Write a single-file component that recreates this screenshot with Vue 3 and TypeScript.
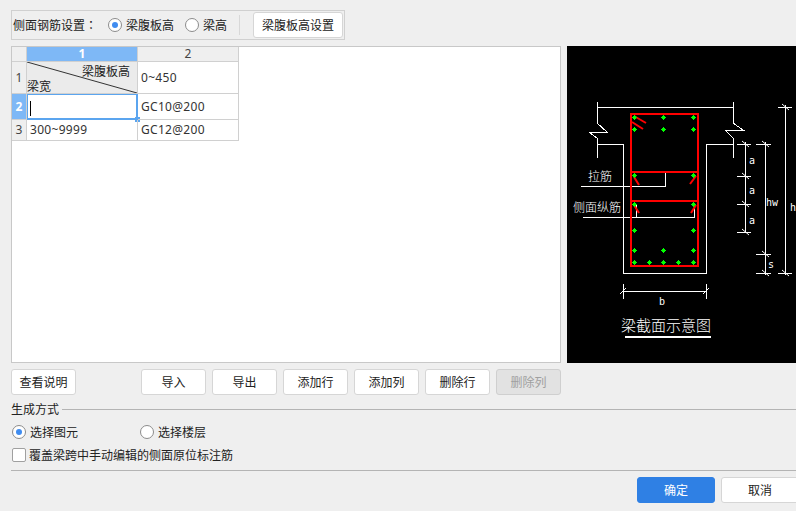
<script setup lang="ts">
const actions = [
  { label: "导入" },
  { label: "导出" },
  { label: "添加行" },
  { label: "添加列" },
  { label: "删除行" },
  { label: "删除列", disabled: true },
];

const topDots = [634, 663, 693];
const sideDots = [634, 693];
const bottomDots = [634, 649, 663, 678, 693];

const dots: number[][] = [
  ...topDots.map((x) => [x, 117]),
  ...topDots.map((x) => [x, 129]),
  ...sideDots.map((x) => [x, 175]),
  ...sideDots.map((x) => [x, 204]),
  ...sideDots.map((x) => [x, 230]),
  ...topDots.map((x) => [x, 250]),
  ...bottomDots.map((x) => [x, 262]),
];

// small blocky diamond, like the rasterised bar marks in the drawing
function dotPath(x: number, y: number) {
  return `M${x} ${y - 2}h1v1h1v1h1v1h-1v1h-1v1h-1v-1h-1v-1h-1v-1h1v-1h1z`;
}

const whiteLines = [
  "597,102 597,123 607,132 589,132 597,138 597,158",
  "733,102 733,123 743,130 725,130 733,138 733,158",
  "597,107 733,107",
  "597,144 623,144 623,273 706,273 706,144 733,144",
  "581,186 665,186 665,172",
  "583,217 694,217 694,204",
  "636,204 636,217",
  "745,142 745,233",
  "737,144 751,144",
  "737,176 751,176",
  "737,204 751,204",
  "737,232 751,232",
  "765,142 765,275",
  "756,144 771,144",
  "756,254 771,254",
  "756,273 771,273",
  "785,105 785,275",
  "778,107 792,107",
  "778,273 792,273",
  "623,284 623,299",
  "706,284 706,299",
  "623,291 706,291",
];

const ticks = [
  [742, 141, 749, 147],
  [742, 173, 749, 179],
  [742, 201, 749, 207],
  [742, 229, 749, 235],
  [762, 141, 769, 147],
  [762, 251, 769, 257],
  [762, 270, 769, 276],
  [782, 104, 789, 110],
  [782, 270, 789, 276],
  [620, 294, 626, 288],
  [703, 294, 709, 288],
];

const redHooks = [
  [634, 116, 646, 123],
  [632, 122, 643, 129],
  [634, 177, 639, 185],
  [696, 176, 690, 184],
  [634, 205, 639, 213],
  [696, 205, 691, 213],
];
</script>

<template>
  <div class="dialog">
    <div class="toolbar">
      <span class="toolbar-label">侧面钢筋设置<span class="colon">：</span></span>
      <label class="radio first"><i class="dot on"></i>梁腹板高</label>
      <label class="radio second"><i class="dot"></i>梁高</label>
      <span class="divider"></span>
      <button class="btn setting">梁腹板高设置</button>
    </div>

    <div class="main">
      <div class="panel">
        <div class="sheet">
          <div class="cell head corner"></div>
          <div class="cell head picked bold">1</div>
          <div class="cell head">2</div>

          <div class="cell head">1</div>
          <div class="cell diagonal">
            <svg class="slash" width="110" height="31" viewBox="0 0 110 31">
              <line x1="0" y1="0" x2="110" y2="31" stroke="#333" />
            </svg>
            <span class="diag-top">梁腹板高</span>
            <span class="diag-bottom">梁宽</span>
          </div>
          <div class="cell value">0~450</div>

          <div class="cell head picked bold">2</div>
          <div class="cell editing">
            <i class="caret"></i>
            <i class="handle"></i>
          </div>
          <div class="cell value">GC10@200</div>

          <div class="cell head">3</div>
          <div class="cell value">300~9999</div>
          <div class="cell value">GC12@200</div>
        </div>
      </div>

      <svg class="figure" width="229" height="317" viewBox="567 46 229 317">
        <rect x="567" y="46" width="229" height="317" fill="#000" />
        <g fill="none" stroke="#fff" shape-rendering="crispEdges">
          <polyline v-for="(pts, i) in whiteLines" :key="i" :points="pts" />
        </g>
        <g stroke="#fff">
          <line v-for="(t, i) in ticks" :key="i" :x1="t[0]" :y1="t[1]" :x2="t[2]" :y2="t[3]" />
        </g>
        <g fill="none" stroke="#f00" stroke-width="2" shape-rendering="crispEdges">
          <rect x="631" y="114" width="67" height="152" />
          <line x1="631" y1="172" x2="698" y2="172" />
          <line x1="631" y1="201" x2="698" y2="201" />
        </g>
        <g stroke="#f00" stroke-width="2">
          <line v-for="(h, i) in redHooks" :key="i" :x1="h[0]" :y1="h[1]" :x2="h[2]" :y2="h[3]" />
        </g>
        <g fill="#0f0" shape-rendering="crispEdges">
          <path v-for="(d, i) in dots" :key="i" :d="dotPath(d[0], d[1])" />
        </g>
        <g class="fig-text" fill="#fff">
          <text x="588" y="181" font-size="12">拉筋</text>
          <text x="573" y="212" font-size="12">侧面纵筋</text>
          <text x="621" y="331" font-size="15">梁截面示意图</text>
        </g>
        <g class="fig-latin" fill="#fff" font-size="10">
          <text x="749" y="164">a</text>
          <text x="749" y="194">a</text>
          <text x="749" y="224">a</text>
          <text x="766" y="206">hw</text>
          <text x="790" y="211">h</text>
          <text x="768" y="268">s</text>
          <text x="659" y="305">b</text>
        </g>
        <rect x="625" y="336" width="86" height="2" fill="#fff" />
      </svg>
    </div>

    <div class="actions">
      <button class="btn explain">查看说明</button>
      <button
        v-for="a in actions"
        :key="a.label"
        class="btn action"
        :class="{ disabled: a.disabled }"
      >
        {{ a.label }}
      </button>
    </div>

    <div class="group-title">
      <span>生成方式</span>
      <span class="rule"></span>
    </div>
    <div class="mode-row">
      <label class="radio mode"><i class="dot on"></i>选择图元</label>
      <label class="radio"><i class="dot"></i>选择楼层</label>
    </div>
    <label class="check"><i class="box"></i>覆盖梁跨中手动编辑的侧面原位标注筋</label>

    <div class="footer">
      <button class="btn ok">确定</button>
      <button class="btn cancel">取消</button>
    </div>
  </div>
</template>

<style>
html,
body {
  margin: 0;
  background: #efefef;
}
</style>

<style scoped>
.dialog {
  width: 796px;
  height: 511px;
  box-sizing: border-box;
  padding: 10px 0 0 11px;
  overflow: hidden;
  background: #efefef;
  color: #222;
  font: 12px/16px "Noto Sans CJK SC", "Noto Sans", sans-serif;
}
.toolbar {
  width: 334px;
  height: 30px;
  box-sizing: border-box;
  border: 1px solid #d0d0d0;
  display: flex;
  align-items: center;
  padding-left: 1px;
}
.toolbar-label {
  width: 95px;
}
.colon {
  font-family: "Noto Sans CJK TC", sans-serif;
}
.radio {
  display: flex;
  align-items: center;
  gap: 4px;
}
.radio.first {
  width: 77px;
}
.radio.second {
  width: 54px;
}
.dot {
  width: 14px;
  height: 14px;
  box-sizing: border-box;
  border: 1px solid #8c8c8c;
  border-radius: 50%;
  background: #fff;
  display: flex;
  align-items: center;
  justify-content: center;
}
.dot.on::after {
  content: "";
  width: 6px;
  height: 6px;
  border-radius: 50%;
  background: #3f8cf0;
}
.divider {
  width: 1px;
  height: 20px;
  background: #d8d8d8;
  margin-right: 13px;
}
.btn {
  box-sizing: border-box;
  height: 26px;
  padding: 0;
  background: #fff;
  border: 1px solid #d6d6d6;
  border-radius: 3px;
  color: #222;
  font: inherit;
}
.setting {
  width: 90px;
}
.main {
  display: flex;
  gap: 6px;
  height: 317px;
  margin-top: 6px;
}
.panel {
  width: 550px;
  box-sizing: border-box;
  border: 1px solid #c8c8c8;
  background: #fff;
}
.sheet {
  display: grid;
  grid-template-columns: 15px 111px 101px;
  grid-template-rows: 15px 32px 26px 21px;
  font-family: "Noto Sans", "Noto Sans CJK SC", sans-serif;
}
.cell {
  box-sizing: border-box;
  border-right: 1px solid #d0d0d0;
  border-bottom: 1px solid #d0d0d0;
  position: relative;
}
.head {
  background: #efefef;
  color: #444;
  display: flex;
  align-items: center;
  justify-content: center;
}
.picked {
  background: #7eb8f6;
  color: #fff;
}
.bold {
  font-weight: 700;
}
.value {
  display: flex;
  align-items: center;
  padding-left: 3px;
  color: #333;
  letter-spacing: 0.3px;
}
.diagonal {
  background: #ebebeb;
  font-family: "Noto Sans CJK SC", sans-serif;
}
.slash {
  position: absolute;
  left: 0;
  top: 0;
}
.diag-top {
  position: absolute;
  right: 7px;
  top: 1px;
}
.diag-bottom {
  position: absolute;
  left: 0;
  bottom: -1px;
}
.editing {
  border: 2px solid #5ba5ef;
  border-left-width: 1px;
  border-top-width: 1px;
  background: #fff;
}
.caret {
  position: absolute;
  left: 2px;
  top: 6px;
  width: 1px;
  height: 15px;
  background: #000;
}
.handle {
  position: absolute;
  right: -4px;
  bottom: -4px;
  width: 5px;
  height: 5px;
  background: #5ba5ef;
}
.figure {
  display: block;
  flex: none;
}
.fig-text text {
  font-family: "Noto Sans CJK SC", sans-serif;
  font-weight: 300;
}
.fig-latin text {
  font-family: "DejaVu Sans Mono", monospace;
}
.actions {
  display: flex;
  gap: 6px;
  margin-top: 6px;
}
.explain {
  width: 65px;
  margin-right: 59px;
}
.action {
  width: 65px;
}
.disabled {
  background: #e2e2e2;
  border-color: #cfcfcf;
  color: #a0a0a0;
}
.group-title {
  display: flex;
  align-items: center;
  gap: 3px;
  height: 16px;
  margin-top: 6px;
}
.rule {
  flex: 1;
  height: 1px;
  background: #b4b4b4;
}
.mode-row {
  display: flex;
  align-items: center;
  height: 16px;
  margin-top: 7px;
  padding-left: 1px;
}
.mode {
  width: 128px;
}
.check {
  display: flex;
  align-items: center;
  gap: 3px;
  height: 16px;
  margin-top: 7px;
  padding-left: 1px;
}
.box {
  width: 14px;
  height: 14px;
  box-sizing: border-box;
  border: 1px solid #a0a0a0;
  border-radius: 2px;
  background: #fff;
}
.footer {
  display: flex;
  gap: 6px;
  height: 33px;
  margin-top: 7px;
  padding-top: 6px;
  padding-left: 626px;
  border-top: 1px solid #b4b4b4;
  box-sizing: border-box;
}
.ok {
  flex: none;
  width: 78px;
  background: #2f80e4;
  border-color: #2f80e4;
  color: #fff;
}
.cancel {
  flex: none;
  width: 78px;
}
</style>
